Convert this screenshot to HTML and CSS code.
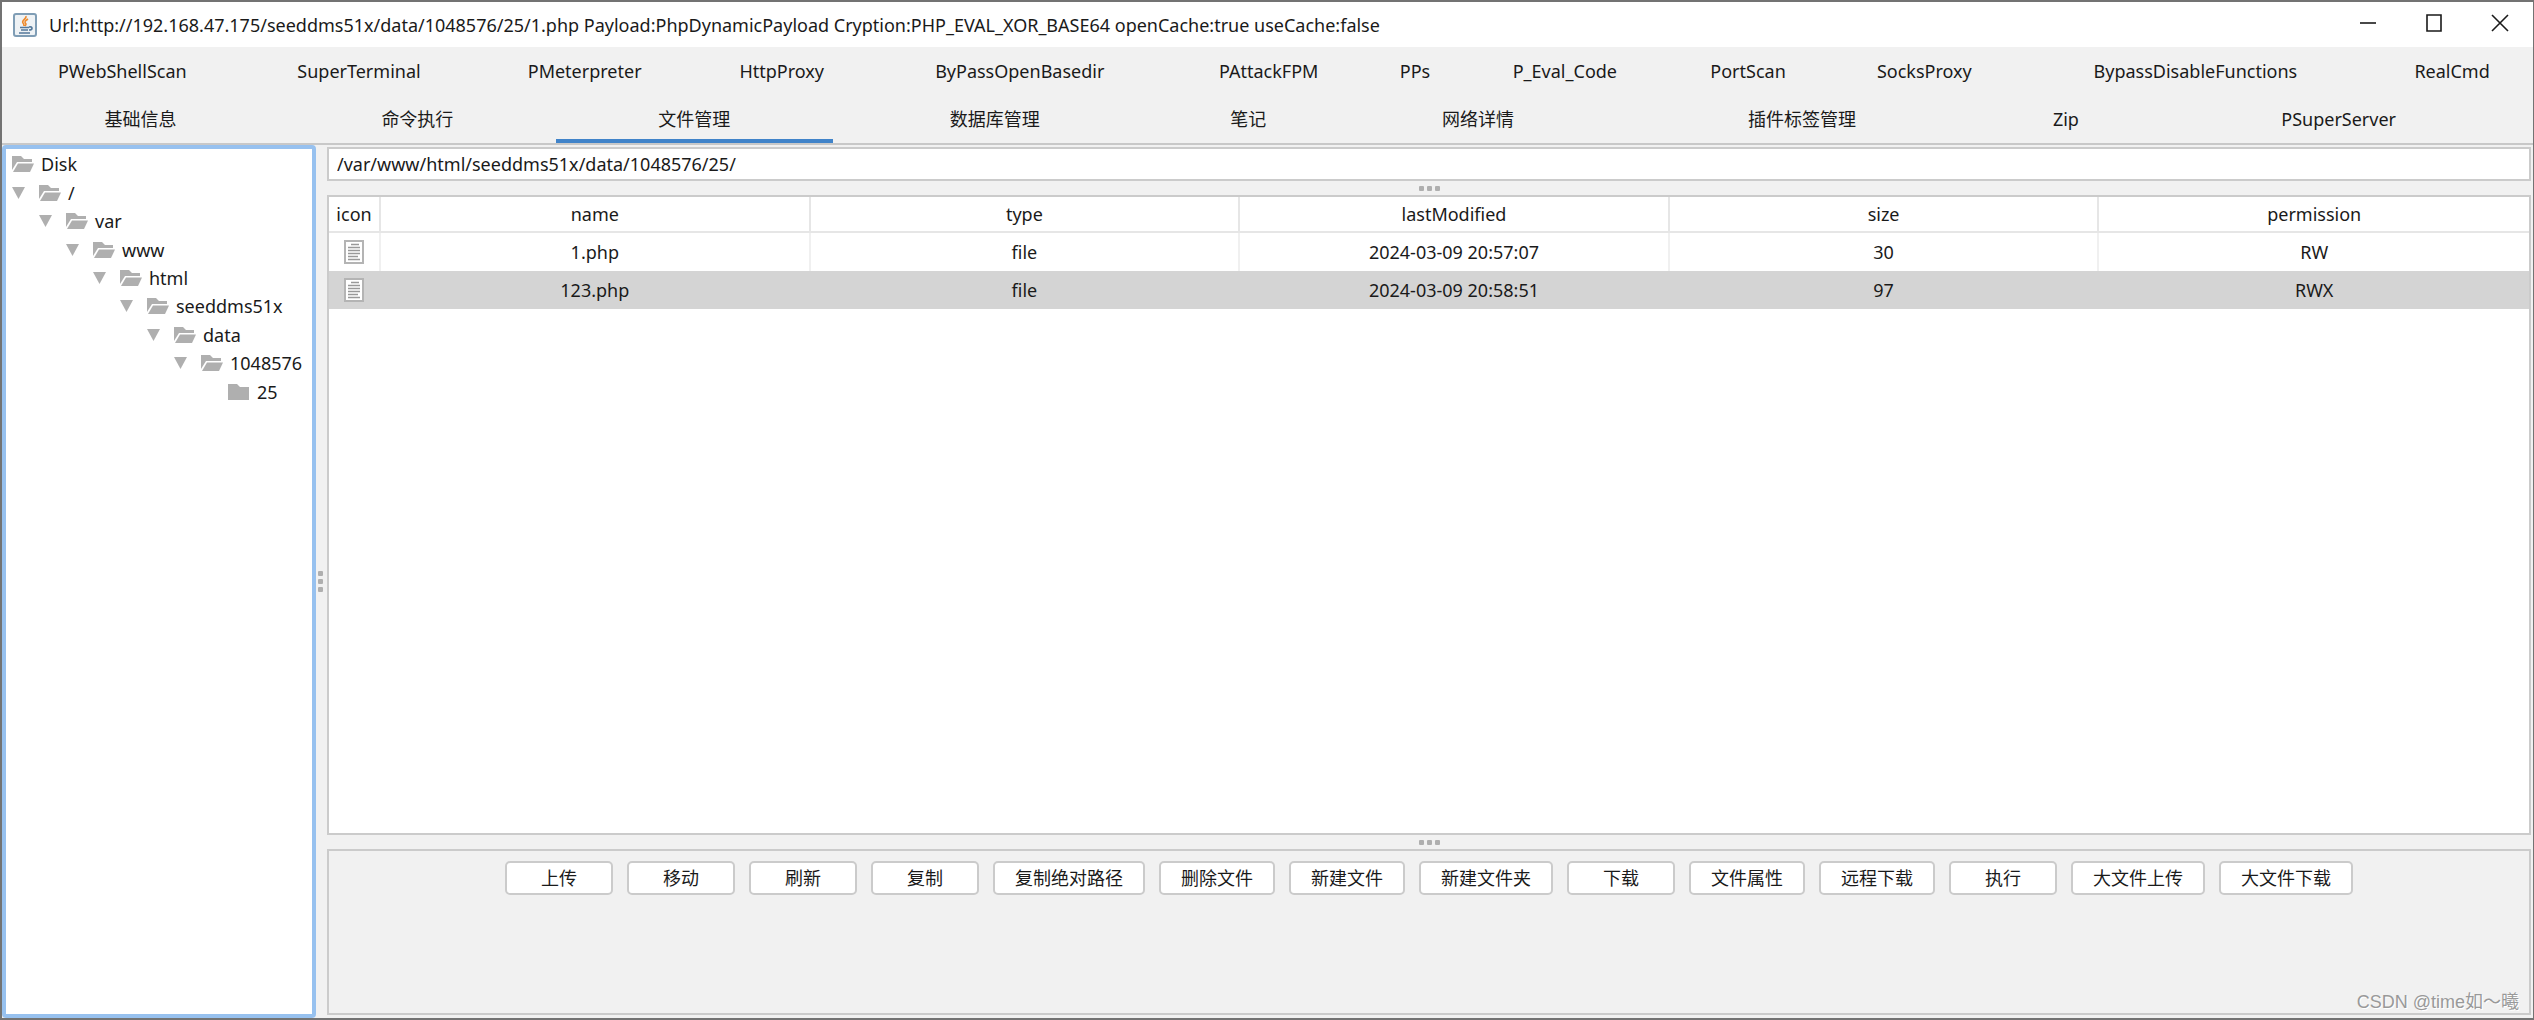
FILE: index.html
```html
<!DOCTYPE html>
<html lang="zh-CN">

<head>
  <meta charset="UTF-8" />
  <meta name="viewport" content="width=device-width, initial-scale=1.0" />
  <title>File Manager</title>
  <link rel="stylesheet" href="styles.css">
</head>

<body>
  <!-- Shared icons -->
  <svg class="sprite" aria-hidden="true">
    <symbol id="folder-open" viewBox="0 0 22 18">
      <path d="M0 17V1h9l3 3h8v3H5L0 15z" />
      <path d="M6 8.500h16L18 17H1z" />
    </symbol>
    <symbol id="folder" viewBox="0 0 22 18">
      <path d="M0 17V1h9l3 3h9v13z" />
    </symbol>
    <symbol id="arrow" viewBox="0 0 13 12">
      <path d="M0 0h13L6.500 12z" />
    </symbol>
    <symbol id="file" viewBox="0 0 20 24">
      <path d="M1 1h18v22H1z" fill="#fff" stroke="#b4b4b4" stroke-width="2" />
      <path d="M7 4.500h8M4 7.500h12M4 10.500h12M4 13.500h12M4 16.500h10M4 19.500h12" stroke="#999" stroke-width="1.500" />
    </symbol>
  </svg>

  <div class="window">
    <header class="title-bar">
      <svg class="java-icon" viewBox="0 0 24 24">
        <rect x="1" y="1" width="22" height="22" rx="2" fill="#eef2f5" stroke="#7f9db5" stroke-width="2" />
        <path d="M13 3c1 3-5 4-3 7 1 1 1 2 1 3M15 6c-3 2-4 3-2 5 0 1 0 1-1 2" fill="none" stroke="#ee8a2c" stroke-width="1.600" />
        <path d="M7 14.500h9M8 17h7M6 20h11M16 14c4-1 4 3 0 3" fill="none" stroke="#54789a" stroke-width="1.600" />
      </svg>
      <h1>Url:http://192.168.47.175/seeddms51x/data/1048576/25/1.php Payload:PhpDynamicPayload Cryption:PHP_EVAL_XOR_BASE64 openCache:true useCache:false</h1>
      <div class="window-controls">
        <button type="button" aria-label="Minimize"><svg viewBox="0 0 18 18"><path d="M1 9h16" /></svg></button>
        <button type="button" aria-label="Maximize"><svg viewBox="0 0 18 18"><path d="M2 1h14v16H2z" /></svg></button>
        <button type="button" aria-label="Close"><svg viewBox="0 0 18 18"><path d="M1 1l16 16M17 1L1 17" /></svg></button>
      </div>
    </header>

    <nav class="tabs">
      <ul class="tab-row">
        <li><button type="button">PWebShellScan</button></li>
        <li><button type="button">SuperTerminal</button></li>
        <li><button type="button">PMeterpreter</button></li>
        <li><button type="button">HttpProxy</button></li>
        <li><button type="button">ByPassOpenBasedir</button></li>
        <li><button type="button">PAttackFPM</button></li>
        <li><button type="button">PPs</button></li>
        <li><button type="button">P_Eval_Code</button></li>
        <li><button type="button">PortScan</button></li>
        <li><button type="button">SocksProxy</button></li>
        <li><button type="button">BypassDisableFunctions</button></li>
        <li><button type="button">RealCmd</button></li>
      </ul>
      <ul class="tab-row">
        <li><button type="button">基础信息</button></li>
        <li><button type="button">命令执行</button></li>
        <li><button type="button" class="active">文件管理</button></li>
        <li><button type="button">数据库管理</button></li>
        <li><button type="button">笔记</button></li>
        <li><button type="button">网络详情</button></li>
        <li><button type="button">插件标签管理</button></li>
        <li><button type="button">Zip</button></li>
        <li><button type="button">PSuperServer</button></li>
      </ul>
    </nav>

    <main class="workspace">
      <aside class="tree-panel">
        <ul class="tree">
          <li style="--level: 0"><svg class="folder"><use href="#folder-open" /></svg>Disk</li>
          <li style="--level: 0"><svg class="arrow"><use href="#arrow" /></svg><svg class="folder"><use href="#folder-open" /></svg>/</li>
          <li style="--level: 1"><svg class="arrow"><use href="#arrow" /></svg><svg class="folder"><use href="#folder-open" /></svg>var</li>
          <li style="--level: 2"><svg class="arrow"><use href="#arrow" /></svg><svg class="folder"><use href="#folder-open" /></svg>www</li>
          <li style="--level: 3"><svg class="arrow"><use href="#arrow" /></svg><svg class="folder"><use href="#folder-open" /></svg>html</li>
          <li style="--level: 4"><svg class="arrow"><use href="#arrow" /></svg><svg class="folder"><use href="#folder-open" /></svg>seeddms51x</li>
          <li style="--level: 5"><svg class="arrow"><use href="#arrow" /></svg><svg class="folder"><use href="#folder-open" /></svg>data</li>
          <li style="--level: 6"><svg class="arrow"><use href="#arrow" /></svg><svg class="folder"><use href="#folder-open" /></svg>1048576</li>
          <li style="--level: 8"><svg class="folder"><use href="#folder" /></svg>25</li>
        </ul>
      </aside>

      <div class="splitter vertical"><i></i><i></i><i></i></div>

      <section class="content">
        <input class="path" type="text" aria-label="Path" value="/var/www/html/seeddms51x/data/1048576/25/">

        <div class="splitter"><i></i><i></i><i></i></div>

        <div class="file-list">
          <table>
            <thead>
              <tr>
                <th class="icon-col">icon</th>
                <th>name</th>
                <th>type</th>
                <th>lastModified</th>
                <th>size</th>
                <th>permission</th>
              </tr>
            </thead>
            <tbody>
              <tr>
                <td><svg class="file"><use href="#file" /></svg></td>
                <td>1.php</td>
                <td>file</td>
                <td>2024-03-09 20:57:07</td>
                <td>30</td>
                <td>RW</td>
              </tr>
              <tr class="selected">
                <td><svg class="file"><use href="#file" /></svg></td>
                <td>123.php</td>
                <td>file</td>
                <td>2024-03-09 20:58:51</td>
                <td>97</td>
                <td>RWX</td>
              </tr>
            </tbody>
          </table>
        </div>

        <div class="splitter"><i></i><i></i><i></i></div>

        <div class="actions">
          <button type="button">上传</button>
          <button type="button">移动</button>
          <button type="button">刷新</button>
          <button type="button">复制</button>
          <button type="button">复制绝对路径</button>
          <button type="button">删除文件</button>
          <button type="button">新建文件</button>
          <button type="button">新建文件夹</button>
          <button type="button">下载</button>
          <button type="button">文件属性</button>
          <button type="button">远程下载</button>
          <button type="button">执行</button>
          <button type="button">大文件上传</button>
          <button type="button">大文件下载</button>
        </div>
      </section>
    </main>
    <div class="watermark">CSDN @time如～曦</div>
  </div>
</body>

</html>
```
FILE: styles.css
```css
/* General Styles */
* {
  box-sizing: border-box;
}

body {
  margin: 0;
  font-family: "Noto Sans", "Noto Sans CJK SC", sans-serif;
  font-size: 18px;
  line-height: 24px;
  color: #1a1a1a;
  background: #f1f1f1;
}

button,
input {
  font: inherit;
  color: inherit;
}

.sprite {
  display: none;
}

.window {
  position: relative;
  display: flex;
  flex-direction: column;
  height: 100vh;
  border: 2px solid #737373;
  border-width: 2px 1px 2px 2px;
}

/* Title Bar */
.title-bar {
  display: flex;
  align-items: center;
  height: 45px;
  padding-left: 11px;
  background: #fff;
}

.java-icon {
  width: 24px;
  height: 24px;
}

.title-bar h1 {
  flex: 1;
  margin: 0 0 0 12px;
  font-size: 18px;
  font-weight: 400;
  white-space: nowrap;
}

.window-controls {
  display: flex;
}

.window-controls button {
  width: 66px;
  height: 44px;
  padding: 0;
  border: none;
  background: none;
}

.window-controls svg {
  width: 18px;
  height: 18px;
  fill: none;
  stroke: #1a1a1a;
  stroke-width: 1.6;
}

/* Tabs */
.tabs {
  border-bottom: 2px solid #c8c8c8;
}

.tab-row {
  display: table;
  width: 100%;
  margin: 0;
  padding: 0;
  list-style: none;
}

.tab-row li {
  display: table-cell;
}

.tab-row button {
  display: block;
  width: 100%;
  height: 48px;
  padding: 0 17px;
  border: none;
  background: none;
  white-space: nowrap;
}

.tab-row .active {
  box-shadow: inset 0 -4px #4083c9;
}

/* Workspace */
.workspace {
  flex: 1;
  display: flex;
  min-height: 0;
}

.tree-panel {
  width: 314px;
  padding: 1px 6px;
  border: 4px solid #97c1ef;
  border-radius: 4px;
  background: #fff;
}

.tree {
  display: grid;
  grid-template-rows: repeat(9, 1fr);
  height: 256px;
  margin: 0;
  padding: 0;
  list-style: none;
}

.tree li {
  display: flex;
  align-items: center;
  padding-left: calc(var(--level) * 27px);
}

.tree svg {
  fill: #afafaf;
}

.folder {
  width: 22px;
  height: 18px;
  margin-right: 7px;
}

.arrow {
  width: 13px;
  height: 12px;
  margin-right: 14px;
}

/* Splitters */
.splitter {
  display: flex;
  align-items: center;
  justify-content: center;
  gap: 3px;
  height: 14px;
}

.splitter i {
  width: 5px;
  height: 5px;
  border-radius: 1px;
  background: #afafaf;
}

.splitter.vertical {
  flex-direction: column;
  width: 11px;
  height: auto;
  padding-right: 2px;
}

/* Content */
.content {
  flex: 1;
  display: flex;
  flex-direction: column;
  min-width: 0;
  padding: 2px 2px 3px 0;
}

.path {
  width: 100%;
  height: 34px;
  padding: 0 8px;
  border: 2px solid #cbcbcb;
  background: #fff;
}

/* File List */
.file-list {
  flex: 1;
  border: 2px solid #cbcbcb;
  background: #fff;
}

table {
  width: 100%;
  table-layout: fixed;
  border-collapse: separate;
  border-spacing: 0;
  text-align: center;
}

th,
td {
  height: 38px;
  padding: 0;
  font-weight: 400;
  border-right: 2px solid #f0f0f0;
}

th {
  height: 36px;
  border-right-color: #e6e6e6;
  border-bottom: 2px solid #e6e6e6;
}

th:last-child,
td:last-child {
  border-right: none;
}

.icon-col {
  width: 52px;
}

.selected td {
  background: #d4d4d4;
  border-color: #d4d4d4;
}

.file {
  display: block;
  width: 20px;
  height: 24px;
  margin: 0 auto;
}

/* Actions */
.actions {
  display: flex;
  align-items: flex-start;
  justify-content: center;
  gap: 14px;
  height: 166px;
  padding-top: 10px;
  border: 2px solid #cbcbcb;
}

.actions button {
  min-width: 108px;
  height: 34px;
  padding: 0 20px;
  border: 2px solid #cbcbcb;
  border-radius: 5px;
  background: #fff;
  white-space: nowrap;
}

/* Watermark */
.watermark {
  position: absolute;
  right: 14px;
  bottom: 4px;
  font-family: "Liberation Sans", "Noto Sans CJK SC", sans-serif;
  color: #999;
  text-shadow: 1px 1px #fff;
}
```
